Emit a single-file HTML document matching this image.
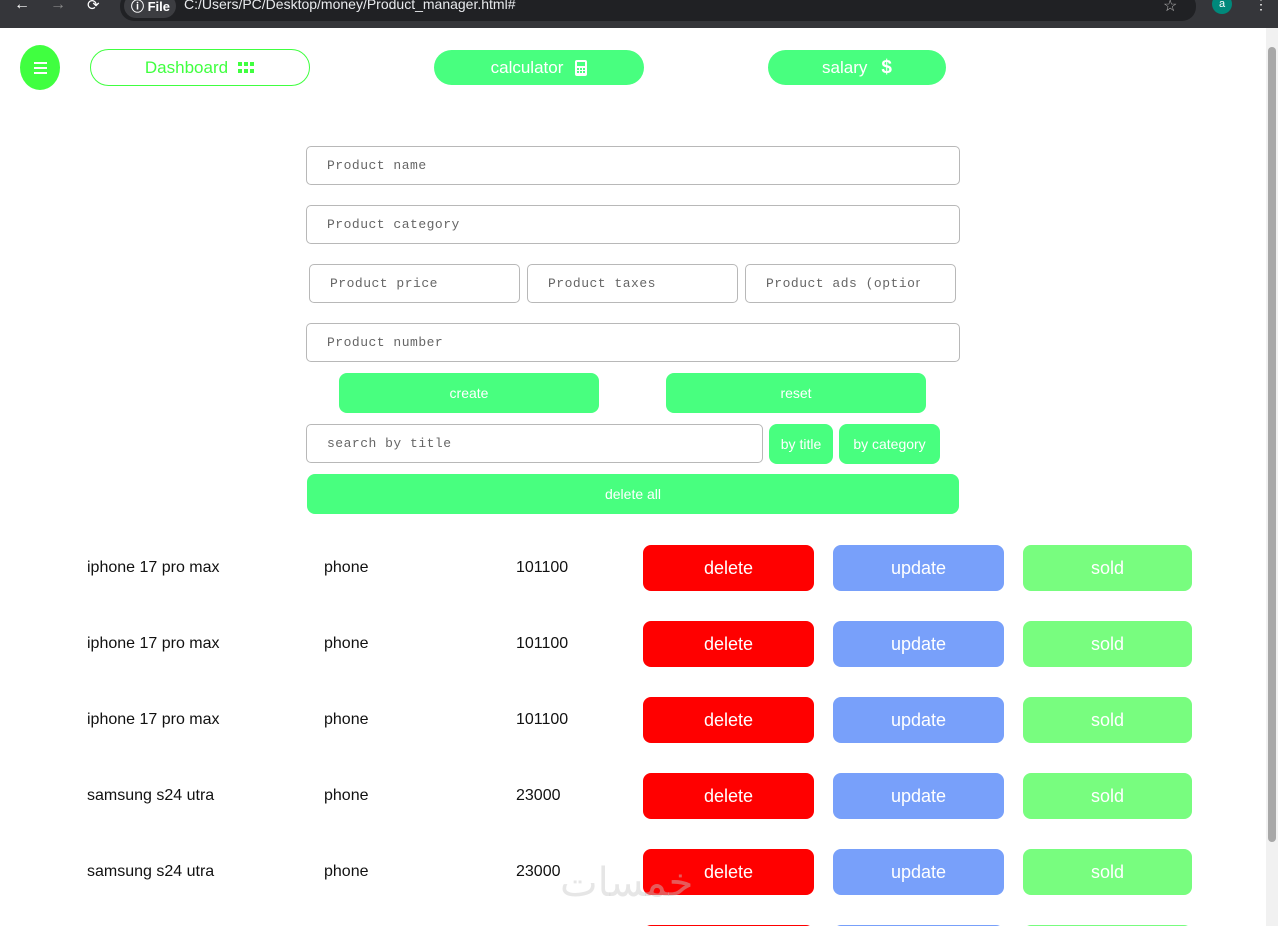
<!DOCTYPE html>
<html style="overflow:hidden;height:926px"><head><meta charset="utf-8"><style>
*{box-sizing:border-box;margin:0;padding:0}
body{width:1278px;height:926px;overflow:hidden;background:#fff;font-family:"Liberation Sans",sans-serif;position:relative}
.a{position:absolute}
.bar{left:0;top:0;width:1278px;height:28px;background:#35363a}
.url{left:120px;top:-8px;width:1076px;height:29px;background:#202124;border-radius:14px}
.bt{color:#fff;font-size:14px;top:-4px}
.g{background:#48ff7f;color:#fff;display:flex;align-items:center;justify-content:center}
.in{border:1px solid #b8b8b8;border-radius:5px;font-family:"Liberation Mono",monospace;font-size:13px;color:#666;display:flex;align-items:center;padding-left:20px;letter-spacing:0.5px;overflow:hidden;white-space:nowrap}
.sb{border-radius:8px;font-size:14px}
.t{font-size:16px;color:#111}
.rb{width:171px;height:46px;border-radius:8px;color:#fff;font-size:18px;display:flex;align-items:center;justify-content:center}
</style></head><body>
<div class="a bar"></div>
<div class="a url"></div>
<div class="a bt" style="left:14px;font-size:16px">←</div>
<div class="a bt" style="left:50px;font-size:16px;color:#888">→</div>
<div class="a bt" style="left:87px;font-size:15px">⟳</div>
<div class="a" style="left:124px;top:-6px;width:52px;height:24px;background:#3c3d41;border-radius:12px"></div>
<div class="a bt" style="left:131px;font-size:13px;font-weight:bold">ⓘ File</div>
<div class="a bt" style="left:184px;font-size:14px;color:#e8eaed">C:/Users/PC/Desktop/money/Product_manager.html#</div>
<div class="a bt" style="left:1163px;font-size:16px;color:#bbb">☆</div>
<div class="a" style="left:1212px;top:-6px;width:20px;height:20px;border-radius:50%;background:#00897b;color:#fff;font-size:11px;text-align:center;line-height:20px">a</div>
<div class="a bt" style="left:1254px;font-size:14px">⋮</div>
<div class="a" style="left:1266px;top:28px;width:12px;height:898px;background:#f1f1f1"></div>
<div class="a" style="left:1268px;top:47px;width:8px;height:795px;background:#a8a8a8;border-radius:4px"></div>

<div class="a" style="left:20px;top:45px;width:40px;height:45px;border-radius:50%;background:#40ff40;display:flex;flex-direction:column;align-items:center;justify-content:center;gap:3px"><i style="display:block;width:13px;height:2px;background:#fff"></i><i style="display:block;width:13px;height:2px;background:#fff"></i><i style="display:block;width:13px;height:2px;background:#fff"></i></div>
<div class="a" style="left:90px;top:49px;width:220px;height:37px;border:1px solid #40ff40;border-radius:19px;color:#40ff40;font-size:17px;display:flex;align-items:center;justify-content:center;gap:10px">Dashboard <svg width="17" height="12"><g fill="#40ff40"><rect x="0" y="0" width="4" height="4"/><rect x="6" y="0" width="4" height="4"/><rect x="12" y="0" width="4" height="4"/><rect x="0" y="7" width="4" height="4"/><rect x="6" y="7" width="4" height="4"/><rect x="12" y="7" width="4" height="4"/></g></svg></div>
<div class="a g" style="left:434px;top:50px;width:210px;height:35px;border-radius:18px;font-size:17px;gap:12px">calculator <svg width="12" height="16"><rect x="0" y="0" width="12" height="16" rx="2" fill="#fff"/><rect x="2" y="2" width="8" height="4" fill="#48ff7f"/><g fill="#48ff7f"><rect x="2" y="8" width="2" height="2"/><rect x="5" y="8" width="2" height="2"/><rect x="8" y="8" width="2" height="2"/><rect x="2" y="11" width="2" height="2"/><rect x="5" y="11" width="2" height="2"/><rect x="8" y="11" width="2" height="2"/></g></svg></div>
<div class="a g" style="left:768px;top:50px;width:178px;height:35px;border-radius:18px;font-size:17px;gap:14px">salary <b style="font-size:19px">$</b></div>

<div class="a in" style="left:306px;top:146px;width:654px;height:39px">Product name</div>
<div class="a in" style="left:306px;top:205px;width:654px;height:39px">Product category</div>
<div class="a in" style="left:309px;top:264px;width:211px;height:39px">Product price</div>
<div class="a in" style="left:527px;top:264px;width:211px;height:39px">Product taxes</div>
<div class="a in" style="left:745px;top:264px;width:211px;height:39px"><span style="display:block;width:154px;overflow:hidden">Product ads (optional)</span></div>
<div class="a in" style="left:306px;top:323px;width:654px;height:39px">Product number</div>
<div class="a g sb" style="left:339px;top:373px;width:260px;height:40px">create</div>
<div class="a g sb" style="left:666px;top:373px;width:260px;height:40px">reset</div>
<div class="a in" style="left:306px;top:424px;width:457px;height:39px">search by title</div>
<div class="a g sb" style="left:769px;top:424px;width:64px;height:40px">by title</div>
<div class="a g sb" style="left:839px;top:424px;width:101px;height:40px">by category</div>
<div class="a g sb" style="left:307px;top:474px;width:652px;height:40px">delete all</div>

<div id="rows"></div>
<div class="a" style="left:560px;top:860px;font-size:40px;color:rgba(200,200,200,0.45);font-family:'DejaVu Sans',sans-serif">خمسات</div>
<script>
var d=[["iphone 17 pro max","101100"],["iphone 17 pro max","101100"],["iphone 17 pro max","101100"],["samsung s24 utra","23000"],["samsung s24 utra","23000"],["",""]];
var h="";d.forEach(function(r,i){var y=545+76*i;
h+='<div class="a t" style="left:87px;top:'+(y+14)+'px">'+r[0]+'</div><div class="a t" style="left:324px;top:'+(y+14)+'px">'+(r[0]?'phone':'')+'</div><div class="a t" style="left:516px;top:'+(y+14)+'px">'+r[1]+'</div>'+
'<div class="a rb" style="left:643px;top:'+y+'px;background:#ff0000">delete</div><div class="a rb" style="left:833px;top:'+y+'px;background:#78a0fa">update</div><div class="a rb" style="left:1023px;top:'+y+'px;width:169px;background:#78fd7f">sold</div>';});
document.getElementById('rows').innerHTML=h;
</script>
</body></html>
